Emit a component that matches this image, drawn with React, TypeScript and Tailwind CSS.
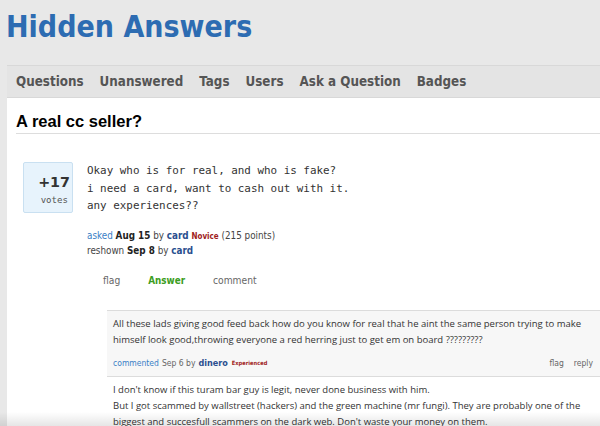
const navItems = ["Questions", "Unanswered", "Tags", "Users", "Ask a Question", "Badges"];

function Comment({ children, meta, shaded }: { children: React.ReactNode; meta?: React.ReactNode; shaded?: boolean }) {
  return (
    <div className={`border-t border-[#dcdcdc] px-[6px] pt-[5px] pb-[7px] ${shaded ? "bg-[#f7f7f7]" : "bg-white"}`}>
      <p className="font-['Open_Sans',sans-serif] text-[9.5px] leading-[16px] font-stretch-normal text-[#333]">{children}</p>
      {meta}
    </div>
  );
}

export default function App() {
  return (
    <div className="relative h-[426px] w-[600px] overflow-hidden bg-[#e8e8e8] font-['DejaVu_Sans',sans-serif] font-stretch-condensed">
      <header className="h-[65px] pl-[6px] pt-[11px]">
        <h1 className="text-[30px] font-bold leading-[32px] text-[#2d6cb2]">Hidden Answers</h1>
      </header>

      <nav className="ml-[7px] flex h-[33px] items-center gap-4 border-y border-[#d8d8d8] bg-[#e4e4e4] pl-[9px] text-[13.3px] font-bold text-[#555]">
        {navItems.map((item) => (
          <a key={item} href="#">{item}</a>
        ))}
      </nav>

      <main className="ml-[7px] h-full bg-white pl-[9px] pt-[13px]">
        <h2 className="border-b border-[#dddddd] pb-[2px] font-['Liberation_Sans',sans-serif] text-[16.5px] font-bold leading-[20px] text-black">
          A real cc seller?
        </h2>

        <div className="mt-[28px] flex">
          <div className="ml-[7px] flex h-[51px] w-[50px] flex-col items-end rounded-[2px] border border-[#c9e0f1] bg-[#e7f3fc] pr-[2px] pt-[11px]">
            <span className="font-stretch-normal text-[14.3px] font-bold leading-[16px] text-[#333]">+17</span>
            <span className="mt-[4px] pr-[2px] font-['DejaVu_Sans_Mono',monospace] text-[9.1px] leading-[12px] text-[#555]">votes</span>
          </div>

          <div className="ml-[14px]">
            <p className="font-['DejaVu_Sans_Mono',monospace] text-[10.9px] leading-[17.6px] text-[#333]">
              Okay who is for real, and who is fake?
              <br />
              i need a card, want to cash out with it.
              <br />
              any experiences??
            </p>

            <div className="mt-[14px] text-[9.8px] leading-[14px] text-[#444]">
              <div>
                <a href="#" className="text-[#3a80c6]">asked</a> <b className="text-[#222]">Aug 15</b> by{" "}
                <a href="#" className="font-bold text-[#2b4f8f]">card</a>{" "}
                <span className="text-[8px] font-bold text-[#a01c1c]">Novice</span> (215 points)
              </div>
              <div>
                reshown <b className="text-[#222]">Sep 8</b> by <a href="#" className="font-bold text-[#2b4f8f]">card</a>
              </div>
            </div>

            <div className="mt-[16px] ml-4 flex gap-7 text-[10.2px] leading-[14px] text-[#666]">
              <button>flag</button>
              <button className="text-[9.8px] font-bold text-[#3c9d22]">Answer</button>
              <button>comment</button>
            </div>
          </div>
        </div>

        <div className="ml-[91px] mt-[22px]">
          <Comment
            shaded
            meta={
              <div className="mt-[9px] flex items-center text-[8.5px] leading-[12px] text-[#666]">
                <a href="#" className="text-[#3a80c6]">commented</a>
                <span className="ml-[3px]">Sep 6 by</span>
                <a href="#" className="ml-[3px] text-[9px] font-bold text-[#2b4f8f]">dinero</a>
                <span className="ml-[4px] text-[5.7px] font-bold text-[#a01c1c]">Experienced</span>
                <span className="ml-auto">flag</span>
                <span className="ml-[10px] mr-[1px]">reply</span>
              </div>
            }
          >
            All these lads giving good feed back how do you know for real that he aint the same person trying to make himself look good,throwing everyone a red herring just to get em on board ?????????
          </Comment>
          <Comment>
            I don't know if this turam bar guy is legit, never done business with him.
            <br />
            But I got scammed by wallstreet (hackers) and the green machine (mr fungi). They are probably one of the biggest and succesfull scammers on the dark web. Don't waste your money on them.
          </Comment>
        </div>
      </main>

      <div className="pointer-events-none absolute inset-x-0 bottom-0 h-[14px] bg-gradient-to-b from-transparent to-black/10" />
    </div>
  );
}
